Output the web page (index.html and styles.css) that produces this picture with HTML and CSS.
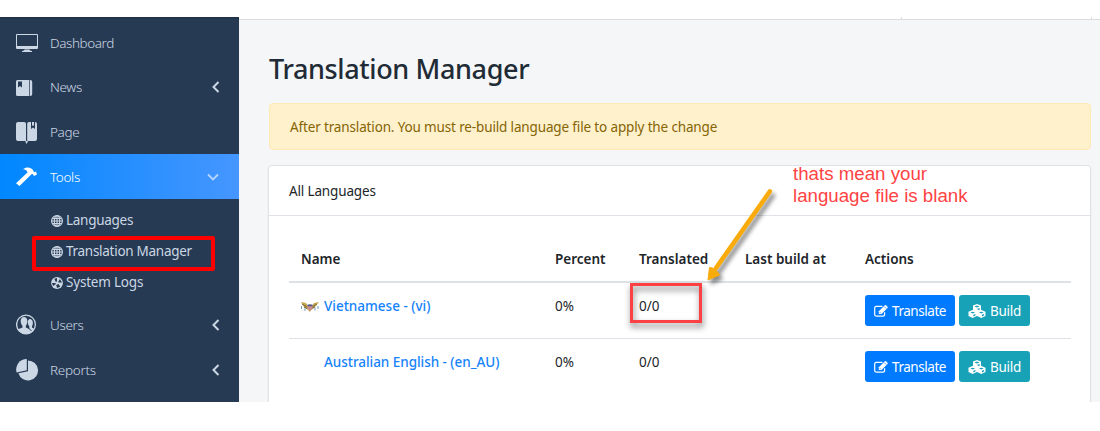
FILE: index.html
```html
<!DOCTYPE html>
<html lang="en">
<head>
<meta charset="utf-8">
<title>Translation Manager</title>
<link rel="stylesheet" href="styles.css">
</head>
<body>
<svg class="defs" width="0" height="0">
  <symbol id="left" viewBox="0 0 8 12"><path d="M6.500 1 1.500 6l5 5" fill="none" stroke="currentColor" stroke-width="2"/></symbol>
  <symbol id="globe" viewBox="0 0 12 12"><g fill="none" stroke="currentColor" stroke-width="1.100"><circle cx="6" cy="6" r="5.400" stroke-width="1.200"/><ellipse cx="6" cy="6" rx="2.700" ry="5.200"/><path d="M6 .8v10.400M.8 6h10.400M1.600 3.500h8.800M1.600 8.500h8.800"/></g></symbol>
  <symbol id="edit" viewBox="0 0 14 12"><path d="M10.600 7.200v2.200a1.700 1.700 0 0 1-1.700 1.700H2.400A1.700 1.700 0 0 1 .7 9.400V3A1.700 1.700 0 0 1 2.400 1.300h6" fill="none" stroke="currentColor" stroke-width="1.200"/><path d="M4.800 6.300 10.800.3q.6-.5 1.200 0l1.500 1.500q.5.600 0 1.200l-6 6H4.800z" fill="currentColor"/><path d="m5.500 6.900 1.300 1.300M10 1.400l2.300 2.300" stroke="#007bff" stroke-width=".6"/></symbol>
  <symbol id="cubes" viewBox="0 0 18 14"><path d="m9 0 4 1.600v4.200L17.500 7.700v4.200L13.300 14 9 12 4.700 14 .5 11.900V7.700L5 5.800V1.600z" fill="currentColor"/><path d="m6.500 2.500 2.500.9 2.500-.9L9 1.600zM9.700 4.600v1.700l2-.8V3.900zM2.300 8.600l2.400 1 2.400-1-2.400-.9zM10.900 8.600l2.400 1 2.400-1-2.400-.9zM5.400 10.800v1.700l2-1V9.900zM14 10.800v1.700l2-1V9.900z" fill="#17a2b8"/></symbol>
</svg>
<div class="app">
  <nav class="sidebar">
    <a class="item first"><svg class="ico" viewBox="0 0 22 22"><path fill="currentColor" fill-rule="evenodd" d="M1 2h20q1 0 1 1v13q0 1-1 1H1q-1 0-1-1V3q0-1 1-1zm0 1.100v10.900h20V3.100zM8.500 17.500h5l.5 1 2 .5v1H6v-1l2-.5z"/></svg><span class="t-dash">Dashboard</span></a>
    <a class="item"><svg class="ico" viewBox="0 0 22 22"><path fill="currentColor" fill-rule="evenodd" d="M1.500 4H12v16H1.500Q0 20 0 18.500v-13Q0 4 1.500 4zM2 5.500v6l2-1.500 2 1.500v-6z"/><path fill="currentColor" d="M12 4h1v16h-1zM13.700 4h.6q1.900 0 1.900 2v12q0 2-1.900 2h-.6z"/></svg><span class="t-news">News</span><svg class="chev" viewBox="0 0 8 12"><use href="#left"/></svg></a>
    <a class="item"><svg class="ico low" viewBox="0 0 22 22"><path fill="currentColor" d="M2 0h6q2 0 2 1.500V19H2q-2 0-2-2V2q0-2 2-2zM11.200 1.500Q11.200 0 13 0h2v7l2-1.500L19 7V0q2 0 2 2v15q0 2-2 2h-7.800zM16 0h2v4l-1-.8-1 .8zM9.500 19h2.200v1l-1.100 2-1.100-2z"/></svg><span class="t-page">Page</span></a>
    <a class="item active"><svg class="ico low" viewBox="0 0 22 22"><path fill="currentColor" d="M7 2.200C10-.4 15-.2 17 3l1 2.300 2-.7 1 3-3 1.500-1.300-2-1.200.2L3.500 19 0 16.200 11.500 5.400C11.200 3.300 9.500 2.400 7 2.200z"/></svg><span class="t-tools">Tools</span><svg class="chev down" viewBox="0 0 12 8"><path d="m1 1.500 5 5 5-5" fill="none" stroke="currentColor" stroke-width="1.800"/></svg></a>
    <div class="submenu">
      <a><svg viewBox="0 0 12 12"><use href="#globe"/></svg><span class="t-lang">Languages</span></a>
      <a class="marked"><svg viewBox="0 0 12 12"><use href="#globe"/></svg><span class="t-tm">Translation Manager</span></a>
      <a><svg viewBox="0 0 12 12"><circle cx="6" cy="6" r="5.900" fill="currentColor"/><path d="M6 4.500V1L3.300 1.700 4.800 5zM7.200 5l1.700-3L11 5.500H7.500zM4.300 6H1l1 3 3-2zM7.500 7 9.300 9.800 6 11 5.200 8z" fill="#273a53"/><circle cx="6" cy="6" r="1" fill="currentColor"/></svg><span class="t-logs">System Logs</span></a>
    </div>
    <a class="item"><svg class="ico" viewBox="0 0 22 22"><circle cx="10" cy="10.500" r="9.400" fill="none" stroke="currentColor" stroke-width="1.300"/><path fill="currentColor" d="M1.500 15.500 6.500 13.500V12C3.500 8 4.500 3 8 3s4.500 5 1.800 9v1.500l3.500 1.500V12.300C11 9.500 11.500 5 14 5s4 4 2 7.300v1.200l2.500 1.500C17 18.500 14 20 10.500 20S3.500 18.500 1.500 15.500z"/><path d="M11.500 13l4 4" stroke="#273a53" stroke-width="1"/></svg><span class="t-users">Users</span><svg class="chev" viewBox="0 0 8 12"><use href="#left"/></svg></a>
    <a class="item"><svg class="ico" viewBox="0 0 22 22"><path fill="currentColor" d="M12 1.500a10 10 0 1 1-9.600 12.800L12 12.300z"/><path fill="currentColor" d="M10.800 0v11.300L.6 13.500A10.500 10.500 0 0 1 10.800 0z"/></svg><span class="t-reports">Reports</span><svg class="chev" viewBox="0 0 8 12"><use href="#left"/></svg></a>
  </nav>
  <main class="content">
    <div class="topbar"><div class="divider"></div></div>
    <h1><span>Translation Manager</span></h1>
    <div class="alert"><span>After translation. You must re-build language file to apply the change</span></div>
    <section class="card">
      <div class="card-head"><span>All Languages</span></div>
      <div class="table">
        <div class="row head"><b>Name</b><b>Percent</b><b>Translated</b><b>Last build at</b><b>Actions</b></div>
        <div class="row">
          <div class="name"><svg class="flag" viewBox="0 0 18 12"><path d="m0 1 5 1 2 3 2-2 2 2 2-3 5-1-4 5-4 3-1 2H9l-2-2-4-3z" fill="#c8a94d"/><path d="m1 3 5 3M16 3l-5 3M3 6l3 1.500M14 6l-3 1.500" stroke="#77663a" stroke-width="1"/><path d="M6.500 4h5v3.500L9 10 6.500 7.500z" fill="#c98d91"/><path d="M6.500 3.500h5v1.700h-5z" fill="#4b5c8c"/><path d="M.5 5v3M17 5v3M4 7v3M14 6.500v3" stroke="#719fbd" stroke-width="1"/></svg><a>Vietnamese - (vi)</a></div><span>0%</span><span>0/0</span><span></span>
          <div class="actions"><a class="btn blue"><svg viewBox="0 0 14 12"><use href="#edit"/></svg><span class="t-tr">Translate</span></a><a class="btn teal"><svg viewBox="0 0 18 14"><use href="#cubes"/></svg><span class="t-bu">Build</span></a></div>
        </div>
        <div class="row">
          <div class="name"><i class="flag"></i><a class="t-au">Australian English - (en_AU)</a></div><span>0%</span><span>0/0</span><span></span>
          <div class="actions"><a class="btn blue"><svg viewBox="0 0 14 12"><use href="#edit"/></svg><span class="t-tr">Translate</span></a><a class="btn teal"><svg viewBox="0 0 18 14"><use href="#cubes"/></svg><span class="t-bu">Build</span></a></div>
        </div>
      </div>
    </section>
  </main>
</div>
<div class="note">thats mean your<br><span>language file is blank</span></div>
<div class="red-box"></div>
<svg class="arrow" width="90" height="120" viewBox="0 0 90 120"><path d="M69.800 11.500 16 88" stroke="#f9ab0b" stroke-width="4.600" stroke-linecap="round"/><path d="M8 100 9.500 87.500 12.500 88l5 3.800L19.500 95z" fill="#f9ab0b" stroke="#f9ab0b"/></svg>
</body>
</html>
```
FILE: styles.css
```css
*, *::after { box-sizing: border-box; }
body { margin: 0; background: #fff; color: #212529; font: 13.5px/21px "Noto Sans", "Open Sans", sans-serif; height: 431px; overflow: hidden; }
.defs { position: absolute; }
span, b, .name a { white-space: nowrap; }
.app { display: flex; margin-top: 17px; height: 385px; overflow: hidden; }
.sidebar { width: 239px; flex: none; background: #273a53; color: #cbd7e4; padding-top: 2px; box-shadow: inset 0 3px 0 -1px #20334b; }
.item { display: flex; align-items: center; height: 45px; padding: 1px 18px 0 16px; font-weight: 300; }
.item.first { padding-top: 3px; }
.item .ico { width: 22px; height: 22px; margin-right: 12px; flex: none; }
.item .ico.low { margin-top: 2px; }
.item .chev { width: 8px; height: 12px; margin: 0 1px 0 auto; }
.item .chev.down { width: 12px; height: 8px; margin-right: 2px; }
.t-dash { letter-spacing: -.42px; }
.t-news, .t-page, .t-users, .t-tools { letter-spacing: -.35px; }
.t-reports { letter-spacing: -.28px; }
.active { color: #fff; background: linear-gradient(90deg, #0087ff, #4696ff); }
.active .chev { color: #b5d5ff; }
.submenu { height: 103px; padding: 6px 0 0 32px; }
.submenu a { display: flex; align-items: center; height: 31px; padding-left: 19px; letter-spacing: -.28px; }
.submenu svg { width: 12px; height: 12px; margin-right: 3px; flex: none; }
.submenu .t-logs { letter-spacing: -.2px; }
.submenu .marked { position: relative; }
.marked::after { content: ""; position: absolute; left: 0; top: 0; width: 183px; height: 35px; border: 4px solid #fe0000; border-radius: 2px; }
.content { flex: 1; background: #f4f6f8; padding: 0 9px 0 30px; }
.topbar { height: 3px; margin: 0 -9px 0 -30px; background: #fff; border-bottom: 1px solid #dcdcdc; padding: 0 8px 0 662px; }
.divider { height: 2px; border: solid #dcdcdc; border-width: 0 1px; }
h1 { margin: 29px 0 15px; font-size: 27px; line-height: 39px; font-weight: 500; color: #212b35; letter-spacing: -.37px; }
.alert { height: 47px; padding: 13px 20px; background: #fff1cc; border: 1px solid #ffeab5; border-radius: 4px; color: #856404; letter-spacing: -.145px; }
.card { height: 300px; margin: 15px 0 0 -1px; background: #fff; border: 1px solid #dfe3e8; border-radius: 4px; box-shadow: 0 1px 2px #0001; }
.card-head { height: 50px; padding: 15px 20px; border-bottom: 1px solid #dfe3e8; letter-spacing: -.15px; }
.table { padding: 21px 19px 0 20px; }
.row { display: grid; grid-template-columns: 254px 84px 106px 120px 1fr; padding: 12px 0 12px 12px; border-top: 1px solid #dee2e6; height: 56px; }
.row.head { height: 46px; border-top: 0; border-bottom: 2px solid #dee2e6; }
.head + .row { border-top: 0; height: 55px; }
.row b { font-weight: 600; }
.row > span, .name { padding-top: 1px; }
.name { display: flex; align-items: center; height: 22px; color: #1683fb; font-weight: 500; }
.t-au { letter-spacing: -.04px; }
.flag { width: 18px; height: 12px; margin-right: 5px; flex: none; }
.actions { display: flex; gap: 4px; }
.btn { height: 31px; border-radius: 3px; color: #fff; display: flex; align-items: center; padding: 1px 0 0 9px; }
.btn svg { width: 14px; height: 12px; margin-right: 4px; flex: none; }
.t-tr { letter-spacing: -.45px; }
.t-bu { letter-spacing: -.25px; }
.blue { background: #007bff; width: 90px; }
.teal { background: #17a2b8; width: 71px; }
.btn.teal svg { width: 18px; height: 14px; }
.note { position: absolute; left: 793px; top: 163px; color: #ff4343; font: 18.7px/22px "Liberation Sans", Arial, sans-serif; white-space: nowrap; }
.red-box { position: absolute; left: 630px; top: 283px; width: 72px; height: 40px; border: 3px solid #fb4144; filter: drop-shadow(1px 4px 3px #0008); }
.arrow { position: absolute; left: 700px; top: 180px; filter: drop-shadow(3px 4px 2px #0007); }
```
